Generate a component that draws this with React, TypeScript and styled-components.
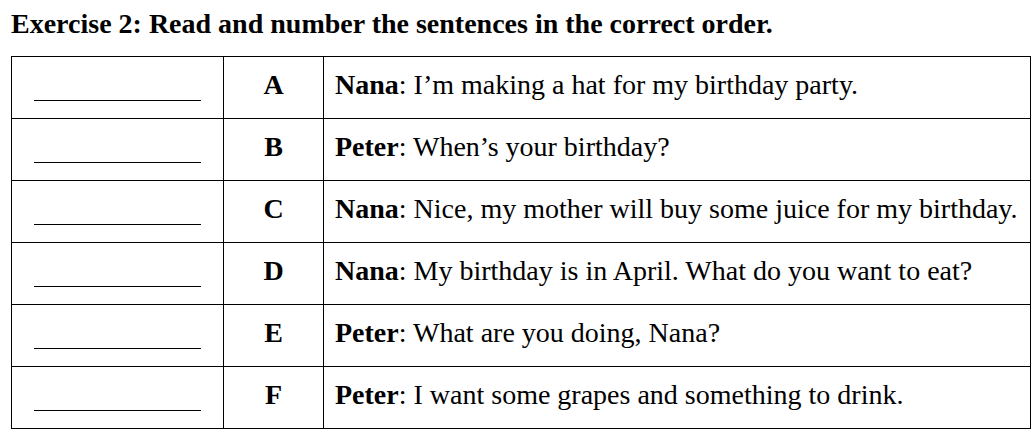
import React from "react";
import styled, { createGlobalStyle } from "styled-components";

const Global = createGlobalStyle`
  html, body { margin: 0; padding: 0; background: #fff; }
  body { font-family: "Liberation Serif", "Times New Roman", serif; color: #000; }
`;

const Page = styled.div`
  padding: 6px 0 0 11px;
  width: 1020px;
`;

const Title = styled.h1`
  margin: 0;
  font-size: 28px;
  line-height: 36px;
  font-weight: bold;
  height: 50px;
  white-space: nowrap;
`;

const Table = styled.table`
  border-collapse: collapse;
  width: 1020px;
  table-layout: fixed;
`;

const Row = styled.tr`
  height: 62px;
`;

const Cell = styled.td`
  border: 1px solid #000;
  font-size: 28px;
  padding: 0 0 6px 0;
  vertical-align: middle;
`;

const BlankCell = styled(Cell)`
  width: 211px;
  text-align: center;
`;

const LetterCell = styled(Cell)`
  width: 99px;
  text-align: center;
  font-weight: bold;
`;

const TextCell = styled(Cell)`
  padding-left: 11px;
  white-space: nowrap;
`;

const Blank = styled.span`
  display: inline-block;
  width: 167px;
  border-bottom: 1px solid #000;
  height: 0;
  vertical-align: baseline;
  transform: translateY(7px);
`;

const rows: [string, string, string][] = [
  ["A", "Nana", "I’m making a hat for my birthday party."],
  ["B", "Peter", "When’s your birthday?"],
  ["C", "Nana", "Nice, my mother will buy some juice for my birthday."],
  ["D", "Nana", "My birthday is in April. What do you want to eat?"],
  ["E", "Peter", "What are you doing, Nana?"],
  ["F", "Peter", "I want some grapes and something to drink."],
];

export default function App() {
  return (
    <Page>
      <Global />
      <Title>Exercise 2: Read and number the sentences in the correct order.</Title>
      <Table>
        <tbody>
          {rows.map(([l, who, text]) => (
            <Row key={l}>
              <BlankCell><Blank /></BlankCell>
              <LetterCell>{l}</LetterCell>
              <TextCell><b>{who}</b>: {text}</TextCell>
            </Row>
          ))}
        </tbody>
      </Table>
    </Page>
  );
}
